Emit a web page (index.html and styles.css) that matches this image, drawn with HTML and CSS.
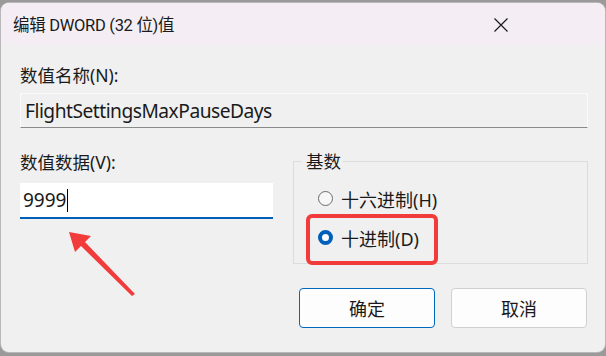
FILE: index.html
```html
<!DOCTYPE html>
<html lang="zh-CN">
<head>
    <meta charset="UTF-8">
    <title>编辑 DWORD (32 位)值</title>
    <link rel="stylesheet" href="styles.css">
</head>
<body>
    <div class="window">
        <div class="titlebar">
            <span class="title">编辑 DWORD (32 位)值</span>
            <svg class="close" width="16" height="16" viewBox="0 0 16 16">
                <path d="M1.5 1.5 L14.5 14.5 M14.5 1.5 L1.5 14.5" stroke="#1a1a1a" stroke-width="1.2" fill="none"/>
            </svg>
        </div>

        <div class="content">
            <label class="label">数值名称(N):</label>
            <div class="name-box">FlightSettingsMaxPauseDays</div>

            <div class="row">
                <div class="data-col">
                    <label class="label">数值数据(V):</label>
                    <div class="value-box">9999<span class="caret"></span></div>
                </div>

                <fieldset class="base-group">
                    <legend>基数</legend>
                    <div class="radio"><span class="dot"></span>十六进制(H)</div>
                    <div class="radio checked"><span class="dot"></span>十进制(D)</div>
                    <div class="highlight"></div>
                </fieldset>
            </div>

            <div class="buttons">
                <button class="btn primary">确定</button>
                <button class="btn">取消</button>
            </div>

            <!-- annotation arrow -->
            <svg class="arrow" width="70" height="66" viewBox="0 0 70 66">
                <polygon points="1,1 23,5 17,11 67,63 64,65 13,15 7,21" fill="#f23c3c"/>
            </svg>
        </div>
    </div>
</body>
</html>
```

FILE: styles.css
```css
body {
    margin: 0;
    padding: 3px 1px 4px 1px;
    background-color: #9a9a9a;
    font-family: "Noto Sans", "Noto Sans CJK SC", sans-serif;
    color: #1a1a1a;
}

.window {
    height: 349px;
    border-radius: 8px;
    background-color: #f0f0f0;
    overflow: hidden;
    box-shadow: 0 0 0 1px #b8b8b8;
}

.titlebar {
    display: flex;
    align-items: center;
    justify-content: space-between;
    height: 42px;
    padding: 0 96px 0 12px;
    background-color: #f4eef4;
}

.title {
    font-family: "Roboto", "Noto Sans CJK SC", sans-serif;
    font-size: 16.5px;
    letter-spacing: -0.3px;
}

.close {
    margin-top: 2px;
}

.content {
    position: relative;
    padding: 19px 17px 0 19px;
}

.label {
    display: block;
    font-size: 17.5px;
    line-height: 22px;
}

.name-box {
    margin-top: 7px;
    height: 35px;
    padding-left: 4px;
    font-size: 19.2px;
    line-height: 33px;
    letter-spacing: -0.5px;
    border: 1px solid #fafafa;
    border-bottom: 1px solid #8a8a8a;
    box-sizing: border-box;
}

.row {
    display: flex;
    align-items: flex-start;
    gap: 20px;
    margin-top: 19px;
}

.data-col {
    width: 253px;
    padding-top: 4px;
}

.value-box {
    margin-top: 10px;
    height: 34px;
    padding-left: 3px;
    background-color: #ffffff;
    border-bottom: 2px solid #005fb8;
    font-size: 19px;
    display: flex;
    align-items: center;
}

.caret {
    display: inline-block;
    width: 1px;
    height: 23px;
    margin-left: 1px;
    background-color: #000000;
}

.base-group {
    position: relative;
    flex: 1;
    margin: 3px 0 0 0;
    padding: 7px 0 6px 24px;
    border: 1px solid #dcdcdc;
}

.base-group legend {
    padding: 0 2px 0 5px;
    margin-left: -17px;
    font-size: 17.5px;
    line-height: 22px;
}

.radio {
    display: flex;
    align-items: center;
    height: 39px;
    font-size: 18px;
}

.radio .dot {
    width: 13px;
    height: 13px;
    margin-right: 8px;
    border: 1px solid #6b6b6b;
    border-radius: 50%;
    background-color: #f7f7f7;
}

.radio.checked .dot {
    width: 7px;
    height: 7px;
    border: 4px solid #005fb8;
    background-color: #ffffff;
}

.highlight {
    position: absolute;
    left: 12px;
    top: 42px;
    width: 132px;
    height: 51px;
    border: 4px solid #f23c3c;
    border-radius: 6px;
    box-sizing: border-box;
}

.buttons {
    display: flex;
    justify-content: flex-end;
    gap: 16px;
    margin-top: 24px;
    padding-right: 1px;
}

.btn {
    width: 136px;
    height: 40px;
    background-color: #fdfdfd;
    border: 1px solid #d0d0d0;
    border-radius: 4px;
    font-family: inherit;
    font-size: 18px;
    color: #1a1a1a;
}

.btn.primary {
    border-color: #0067c0;
}

.arrow {
    position: absolute;
    left: 67px;
    top: 186px;
}
```
